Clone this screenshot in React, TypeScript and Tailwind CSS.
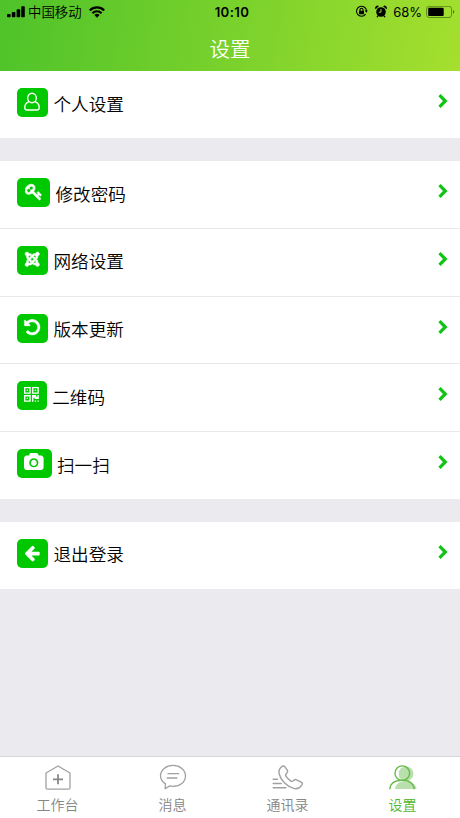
import type { ReactNode } from 'react';
import { FaJoomla } from 'react-icons/fa';

function Glyph({ box, w, h, d, bold = 0 }: { box: string; w: number; h: number; d: string; bold?: number }) {
  return (
    <svg viewBox={box} width={w} height={h} fill="currentColor" stroke="currentColor" strokeWidth={bold} className="block shrink-0">
      <path d={d} />
    </svg>
  );
}

const UserIcon = (
  <svg width="18" height="20" viewBox="0 0 18 20" fill="none" stroke="currentColor" strokeWidth="1.4" className="mb-[1px] mr-[1px] block">
    <ellipse cx="9" cy="6" rx="4.3" ry="4.8" />
    <path d="M6 9.6C3.2 10.7 1.8 12.7 1.8 15.4c0 1.7.8 2.6 2.4 2.6h9.6c1.6 0 2.4-.9 2.4-2.6 0-2.7-1.4-4.7-4.2-5.8" />
  </svg>
);

const KeyIcon = (
  <Glyph box="0 0 1792 1792" w={17.6} h={17.6} bold={70} d="M832 512q0-80-56-136t-136-56-136 56-56 136q0 42 19 83-41-19-83-19-80 0-136 56t-56 136 56 136 136 56 136-56 56-136q0-42-19-83 41 19 83 19 80 0 136-56t56-136zm851 704q0 17-49 66t-66 49q-9 0-28.5-16t-36.5-33-38.5-40-24.5-26l-96 96 220 220q28 28 28 68 0 42-39 81t-81 39q-40 0-68-28l-671-671q-176 131-365 131-163 0-265.5-102.5t-102.5-265.5q0-160 95-313t248-248 313-95q163 0 265.5 102.5t102.5 265.5q0 189-131 365l355 355 96-96q-3-3-26-24.5t-40-38.5-33-36.5-16-28.5q0-17 49-66t66-49q13 0 23 10 6 6 46 44.5t82 79.5 86.5 86 73 78 28.5 41z" />
);

const UndoIcon = (
  <Glyph box="0 0 1792 1792" w={18.4} h={18.4} bold={30} d="M1664 896q0 156-61 298t-164 245-245 164-298 61q-172 0-327-72.5t-264-204.5q-7-10-6.5-22.5t8.5-20.5l137-138q10-9 25-9 16 2 23 12 73 95 179 147t225 52q104 0 198.5-40.5t163.5-109.5 109.5-163.5 40.5-198.5-40.5-198.5-109.5-163.5-163.5-109.5-198.5-40.5q-98 0-188 35.5t-160 101.5l137 138q31 30 14 69-17 40-59 40h-448q-26 0-45-19t-19-45v-448q0-42 40-59 39-17 69 14l130 129q107-101 244.5-156.5t284.5-55.5q156 0 298 61t245 164 164 245 61 298z" />
);

const QrIcon = (
  <Glyph box="0 128 1408 1408" w={14.8} h={14.8} d="M384 1152v128h-128v-128h128zm0-768v128h-128v-128h128zm768 0v128h-128v-128h128zm-1024 1023h384v-383h-384v383zm0-767h384v-384h-384v384zm768 0h384v-384h-384v384zm-256 256v640h-640v-640h640zm512 512v128h-128v-128h128zm256 0v128h-128v-128h128zm0-512v384h-384v-128h-128v384h-128v-640h384v128h128v-128h128zm-768-768v640h-640v-640h640zm768 0v640h-640v-640h640z" />
);

const CameraIcon = (
  <Glyph box="0 0 1920 1792" w={19.6} h={18.3} d="M960 672q119 0 203.5 84.5t84.5 203.5-84.5 203.5-203.5 84.5-203.5-84.5-84.5-203.5 84.5-203.5 203.5-84.5zm704-416q106 0 181 75t75 181v896q0 106-75 181t-181 75h-1408q-106 0-181-75t-75-181v-896q0-106 75-181t181-75h224l51-136q19-49 69.5-84.5t103.5-35.5h512q53 0 103.5 35.5t69.5 84.5l51 136h224zm-704 1152q185 0 316.5-131.5t131.5-316.5-131.5-316.5-316.5-131.5-316.5 131.5-131.5 316.5 131.5 316.5 316.5 131.5z" />
);

const BackIcon = (
  <Glyph box="0 0 1792 1792" w={18} h={18} d="M1664 896v128q0 53-32.5 90.5t-84.5 37.5h-704l293 294q38 36 38 90t-38 90l-75 76q-37 37-90 37-52 0-91-37l-651-652q-37-37-37-90 0-52 37-91l651-650q38-38 91-38 52 0 90 38l75 74q38 38 38 91t-38 91l-293 293h704q52 0 84.5 37.5t32.5 90.5z" />
);

function Row({ icon, label, tile, line = false }: { icon: ReactNode; label: string; tile: string; line?: boolean }) {
  return (
    <div className={`flex shrink-0 items-start bg-white pl-[17px] pr-[12px] pt-[17px] ${line ? 'h-[67.7px] border-b border-[#e9e9ed]' : 'h-[67.2px]'}`}>
      <span className={`flex h-[29px] shrink-0 items-center justify-center rounded-[5px] bg-[#00c800] text-white ${tile}`}>{icon}</span>
      <span className="ml-[5.5px] mt-[3.5px] text-[17.6px] leading-[26px] text-black">{label}</span>
      <svg width="10" height="16" viewBox="0 0 10 16" className="ml-auto mt-[5px]" fill="none" stroke="#10c414" strokeWidth="3.2">
        <path d="M1.5 2.2 7.3 8l-5.8 5.8" />
      </svg>
    </div>
  );
}

function Tab({ icon, label, active = false }: { icon: ReactNode; label: string; active?: boolean }) {
  return (
    <div className={`flex flex-1 flex-col items-center pt-[6px] ${active ? 'text-[#4fb52e]' : 'text-[#868686]'}`}>
      {icon}
      <span className="mt-[4px] text-[14px] leading-[20px]">{label}</span>
    </div>
  );
}

const tabSvg = 'block h-[28px] w-[32px]';

export default function App() {
  return (
    <div className="flex h-[818px] w-[460px] flex-col overflow-hidden bg-[#ebebef] font-['Liberation_Sans','Noto_Sans_CJK_SC',sans-serif] font-[350]">
      <header className="h-[71px] shrink-0 bg-[linear-gradient(100deg,#4ec32a_0%,#a5df2e_100%)]">
        <div className="flex h-[24px] items-center pl-[7px] pr-[5px] text-black">
          <div className="flex flex-1 items-center">
            <svg width="18" height="12" viewBox="0 0 18 12" className="block">
              <rect x="0" y="8" width="3.6" height="3.2" rx=".8" />
              <rect x="4.8" y="6" width="3.6" height="5.2" rx=".8" />
              <rect x="9.6" y="3.3" width="3.6" height="7.9" rx=".8" />
              <rect x="14.2" y=".3" width="3.6" height="10.9" rx=".8" />
            </svg>
            <span className="ml-[3px] mt-[2px] text-[13.4px] leading-[20px]">中国移动</span>
            <svg width="16" height="12" viewBox="0 0 16 12" className="mb-[1px] ml-[7px] block" fill="none" stroke="black" strokeWidth="2.1">
              <path d="M.8 4.4a10.2 10.2 0 0 1 14.4 0M3.4 7.2a6.5 6.5 0 0 1 9.2 0" />
              <path d="M5.4 9a3.8 3.8 0 0 1 5.2 0L8 11.7Z" fill="black" stroke="none" />
            </svg>
          </div>
          <span className="mb-[1px] ml-[2px] font-[Inter,'Liberation_Sans',sans-serif] text-[13.2px] font-semibold leading-[20px] tracking-[0.4px]">10:10</span>
          <div className="flex flex-1 items-center justify-end">
            <svg width="13" height="13" viewBox="0 0 13 13" className="mb-[1px] block" fill="none" stroke="black" strokeWidth="1.1">
              <path d="M10.6 9.1a5 5 0 1 1 .9-3.2" />
              <path d="m9.600 5.600 1.900 2.100 1.300-2.100Z" fill="black" stroke="none" />
              <rect x="4" y="5.700" width="5" height="3.600" rx=".4" fill="black" stroke="none" />
              <path d="M5 6V4.700a1.500 1.500 0 0 1 3 0V6" />
            </svg>
            <svg width="12" height="13" viewBox="0 0 12 13" className="mb-[1px] ml-[7px] block">
              <circle cx="6" cy="7" r="4.8" />
              <path d="M.5 4.2A2.3 2.3 0 0 1 3.9 1.2ZM11.5 4.2A2.3 2.3 0 0 0 8.1 1.2ZM2.2 10.4l1.400 1-1.200 1.200-.9-.8ZM9.800 10.400l-1.400 1 1.200 1.200.9-.8Z" />
              <path d="M6 4v3.200H3.800" fill="none" stroke="#8dd52d" strokeWidth="1" />
            </svg>
            <span className="ml-[6px] font-[Inter,'Liberation_Sans',sans-serif] text-[13px] font-normal leading-[20px]">68%</span>
            <svg width="29" height="13" viewBox="0 0 29 13" className="ml-[4px] block">
              <rect x=".6" y=".3" width="25" height="11.2" rx="2.6" fill="none" stroke="#5d8a1d" strokeWidth="1" />
              <rect x="2.2" y="1.8" width="15.5" height="8.2" rx="1" />
              <path d="M27 4.1c1.600.5 1.600 3.100 0 3.600Z" fill="#496d18" />
            </svg>
          </div>
        </div>
        <h1 className="pt-[11px] text-center text-[20.5px] font-[350] leading-[30px] text-white">设置</h1>
      </header>

      <main className="flex flex-1 flex-col">
        <Row icon={UserIcon} label="个人设置" tile="w-[31px]" />
        <div className="mt-[23.1px] flex flex-col">
          <Row icon={KeyIcon} label="修改密码" tile="w-[33px] pb-[2px]" line />
          <Row icon={<FaJoomla size={16.5} stroke="currentColor" strokeWidth={14} />} label="网络设置" tile="w-[31px] pb-[2px]" line />
          <Row icon={UndoIcon} label="版本更新" tile="w-[31px] pb-[2px]" line />
          <Row icon={QrIcon} label="二维码" tile="w-[29.7px] pb-[3px]" line />
          <Row icon={CameraIcon} label="扫一扫" tile="w-[34.5px] pb-[2px]" />
        </div>
        <div className="mt-[22.7px] flex flex-col">
          <Row icon={BackIcon} label="退出登录" tile="w-[31px] pb-[1px] pr-[1px]" />
        </div>
      </main>

      <nav className="flex h-[62px] shrink-0 border-t border-[#d6d6da] bg-white">
        <Tab
          label="工作台"
          icon={
            <svg viewBox="0 0 32 28" className={tabSvg} fill="none" stroke="#a0a0a0" strokeWidth="1.3" strokeLinejoin="round">
              <path d="M16 3 4 10v14.7c0 1 .5 1.5 1.5 1.5h21c1 0 1.5-.5 1.5-1.5V10Z" />
              <path d="M16 11.3v10M11 16.300h10" strokeWidth="1.8" stroke="#888888" />
            </svg>
          }
        />
        <Tab
          label="消息"
          icon={
            <svg viewBox="0 0 32 28" className={tabSvg} fill="none" stroke="#a0a0a0" strokeWidth="1.3" strokeLinejoin="round">
              <path d="M8.500 20.900C5.600 19 3.500 16.400 3.500 13c0-6 5.500-10.600 12.500-10.600S28.500 7 28.500 13 23 23.300 16 23.300c-1.200 0-2.200-.1-3.200-.4l-4.700 2.800Z" />
              <path d="M10.500 10.700h11.600M9.800 15h10.500" />
            </svg>
          }
        />
        <Tab
          label="通讯录"
          icon={
            <svg viewBox="0 0 32 28" className={tabSvg} fill="none" stroke="#a0a0a0" strokeWidth="1.4" strokeLinejoin="round" strokeLinecap="round">
              <path d="M9.800 3.600c1.200-1 2.200-.8 3.100.3l2.400 3.300c.9 1.300.5 2-.6 3-1.300 1.100-1.500 1.900-.6 3.200 1.200 1.800 2.600 3.200 4.400 4.500 1.300.9 2.100.7 3.200-.5.9-1 1.700-1.300 2.900-.6l4.600 2.400c1.400.8 1.500 1.700.6 2.900-1.900 2.800-4.800 4.200-8 3.300C14.600 23.400 8.700 17.200 7.200 11c-.7-3 .3-5.700 2.600-7.400Z" />
              <path d="M1.200 16.300h4.200M1.200 20.500h8M1.200 24.700h12.600" />
            </svg>
          }
        />
        <Tab
          label="设置"
          active
          icon={
            <svg viewBox="0 0 32 28" className={tabSvg} fill="none" stroke="#61ba43" strokeWidth="1.4">
              <circle cx="19" cy="10.800" r="7.400" fill="#b9dfad" stroke="none" />
              <path d="M8 26c.5-5 4-7.500 10-7.500 6.600 0 10.600 2.700 11.600 7.500Z" fill="#b9dfad" stroke="none" />
              <circle cx="15.300" cy="10.200" r="7.300" />
              <path d="M2.800 26.200c.5-5.400 4.700-8.800 12.200-8.800 7.400 0 11.700 3.400 12.200 8.800" />
            </svg>
          }
        />
      </nav>
    </div>
  );
}
